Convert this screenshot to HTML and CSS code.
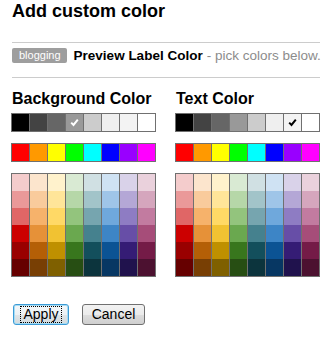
FILE: index.html
```html
<!DOCTYPE html>
<html>
<head>
<meta charset="utf-8">
<link rel="stylesheet" href="styles.css">
</head>
<body>
<div class="page">
  <h1 class="title">Add custom color</h1>
  <div class="rule"></div>
  <div class="preview">
    <span class="badge">blogging</span>
    <span class="preview-title">Preview Label Color</span>
    <span class="preview-hint">- pick colors below.</span>
  </div>
  <div class="rule"></div>
  <div class="pickers">
    <div class="picker">
      <h2 class="picker-title">Background Color</h2>
      <div class="swatches">
        <span class="sw" style="background:#000000"></span>
        <span class="sw" style="background:#434343"></span>
        <span class="sw" style="background:#666666"></span>
        <span class="sw sel" style="background:#999999"><svg class="chk" width="9" height="9" viewBox="0 0 9 9"><path d="M1.2 4.6 L3.5 6.9 L7.8 1.6" fill="none" stroke="#fff" stroke-width="2"/></svg></span>
        <span class="sw" style="background:#cccccc"></span>
        <span class="sw" style="background:#efefef"></span>
        <span class="sw" style="background:#f3f3f3"></span>
        <span class="sw" style="background:#ffffff"></span>
      </div>
      <div class="swatches">
        <span class="sw" style="background:#ff0000"></span>
        <span class="sw" style="background:#ff9900"></span>
        <span class="sw" style="background:#ffff00"></span>
        <span class="sw" style="background:#00ff00"></span>
        <span class="sw" style="background:#00ffff"></span>
        <span class="sw" style="background:#0000ff"></span>
        <span class="sw" style="background:#9900ff"></span>
        <span class="sw" style="background:#ff00ff"></span>
      </div>
      <div class="palette">
        <span style="background:#f4cccc"></span><span style="background:#fce5cd"></span><span style="background:#fff2cc"></span><span style="background:#d9ead3"></span><span style="background:#d0e0e3"></span><span style="background:#cfe2f3"></span><span style="background:#d9d2e9"></span><span style="background:#ead1dc"></span>
        <span style="background:#ea9999"></span><span style="background:#f9cb9c"></span><span style="background:#ffe599"></span><span style="background:#b6d7a8"></span><span style="background:#a2c4c9"></span><span style="background:#9fc5e8"></span><span style="background:#b4a7d6"></span><span style="background:#d5a6bd"></span>
        <span style="background:#e06666"></span><span style="background:#f6b26b"></span><span style="background:#ffd966"></span><span style="background:#93c47d"></span><span style="background:#76a5af"></span><span style="background:#6fa8dc"></span><span style="background:#8e7cc3"></span><span style="background:#c27ba0"></span>
        <span style="background:#cc0000"></span><span style="background:#e69138"></span><span style="background:#f1c232"></span><span style="background:#6aa84f"></span><span style="background:#45818e"></span><span style="background:#3d85c6"></span><span style="background:#674ea7"></span><span style="background:#a64d79"></span>
        <span style="background:#990000"></span><span style="background:#b45f06"></span><span style="background:#bf9000"></span><span style="background:#38761d"></span><span style="background:#134f5c"></span><span style="background:#0b5394"></span><span style="background:#351c75"></span><span style="background:#741b47"></span>
        <span style="background:#660000"></span><span style="background:#783f04"></span><span style="background:#7f6000"></span><span style="background:#274e13"></span><span style="background:#0c343d"></span><span style="background:#073763"></span><span style="background:#20124d"></span><span style="background:#4c1130"></span>
      </div>
    </div>
    <div class="picker">
      <h2 class="picker-title">Text Color</h2>
      <div class="swatches">
        <span class="sw" style="background:#000000"></span>
        <span class="sw" style="background:#434343"></span>
        <span class="sw" style="background:#666666"></span>
        <span class="sw" style="background:#999999"></span>
        <span class="sw" style="background:#cccccc"></span>
        <span class="sw" style="background:#efefef"></span>
        <span class="sw sel" style="background:#f3f3f3"><svg class="chk" width="9" height="9" viewBox="0 0 9 9"><path d="M1.2 4.6 L3.5 6.9 L7.8 1.6" fill="none" stroke="#000" stroke-width="2"/></svg></span>
        <span class="sw" style="background:#ffffff"></span>
      </div>
      <div class="swatches">
        <span class="sw" style="background:#ff0000"></span>
        <span class="sw" style="background:#ff9900"></span>
        <span class="sw" style="background:#ffff00"></span>
        <span class="sw" style="background:#00ff00"></span>
        <span class="sw" style="background:#00ffff"></span>
        <span class="sw" style="background:#0000ff"></span>
        <span class="sw" style="background:#9900ff"></span>
        <span class="sw" style="background:#ff00ff"></span>
      </div>
      <div class="palette">
        <span style="background:#f4cccc"></span><span style="background:#fce5cd"></span><span style="background:#fff2cc"></span><span style="background:#d9ead3"></span><span style="background:#d0e0e3"></span><span style="background:#cfe2f3"></span><span style="background:#d9d2e9"></span><span style="background:#ead1dc"></span>
        <span style="background:#ea9999"></span><span style="background:#f9cb9c"></span><span style="background:#ffe599"></span><span style="background:#b6d7a8"></span><span style="background:#a2c4c9"></span><span style="background:#9fc5e8"></span><span style="background:#b4a7d6"></span><span style="background:#d5a6bd"></span>
        <span style="background:#e06666"></span><span style="background:#f6b26b"></span><span style="background:#ffd966"></span><span style="background:#93c47d"></span><span style="background:#76a5af"></span><span style="background:#6fa8dc"></span><span style="background:#8e7cc3"></span><span style="background:#c27ba0"></span>
        <span style="background:#cc0000"></span><span style="background:#e69138"></span><span style="background:#f1c232"></span><span style="background:#6aa84f"></span><span style="background:#45818e"></span><span style="background:#3d85c6"></span><span style="background:#674ea7"></span><span style="background:#a64d79"></span>
        <span style="background:#990000"></span><span style="background:#b45f06"></span><span style="background:#bf9000"></span><span style="background:#38761d"></span><span style="background:#134f5c"></span><span style="background:#0b5394"></span><span style="background:#351c75"></span><span style="background:#741b47"></span>
        <span style="background:#660000"></span><span style="background:#783f04"></span><span style="background:#7f6000"></span><span style="background:#274e13"></span><span style="background:#0c343d"></span><span style="background:#073763"></span><span style="background:#20124d"></span><span style="background:#4c1130"></span>
      </div>
    </div>
  </div>
  <div class="actions">
    <button class="btn btn-focus"><span class="focus-ring">Apply</span></button>
    <button class="btn">Cancel</button>
  </div>
</div>
</body>
</html>
```

FILE: styles.css
```css
html, body {
  margin: 0;
  padding: 0;
  background: #ffffff;
}
.page {
  width: 309px;
  padding-left: 11px;
  font-family: "Liberation Sans", Arial, sans-serif;
  color: #000;
}
.title {
  margin: 0;
  font-size: 18px;
  line-height: 22px;
  font-weight: bold;
  padding-left: 1px;
}
.rule {
  height: 1px;
  background: #cccccc;
  margin-left: 1px;
}
.title + .rule {
  margin-top: 20px;
}
.preview {
  display: flex;
  align-items: flex-start;
  height: 34px;
  padding-left: 1px;
  box-sizing: border-box;
  padding-top: 5px;
  white-space: nowrap;
}
.preview > span {
  flex-shrink: 0;
}
.badge {
  display: inline-block;
  height: 15px;
  line-height: 15px;
  padding: 0 6px 0 7px;
  background: #9e9e9e;
  color: #fff;
  font-size: 11px;
  border-radius: 2px;
}
.preview-title {
  margin-left: 7px;
  font-size: 13.5px;
  font-weight: bold;
  line-height: 15px;
}
.preview-hint {
  margin-left: 4px;
  font-size: 13.5px;
  line-height: 15px;
  color: #8c8c8c;
}
.pickers {
  display: flex;
  gap: 19px;
  margin-top: 12px;
}
.picker {
  display: flex;
  flex-direction: column;
}
.picker-title {
  margin: 0 0 5px 1px;
  font-size: 16px;
  line-height: 18px;
  font-weight: bold;
  white-space: nowrap;
}
.swatches, .palette {
  display: grid;
  grid-template-columns: repeat(8, 17px);
  column-gap: 1px;
  padding: 1px;
  background: #707070;
  width: max-content;
}
.swatches {
  grid-auto-rows: 17px;
  margin-bottom: 11px;
}
.palette {
  grid-auto-rows: 17px;
  row-gap: 0;
}
.sw {
  display: flex;
  align-items: center;
  justify-content: center;
}
.chk {
  display: block;
}
.actions {
  display: flex;
  gap: 13px;
  margin-top: 27px;
  padding-left: 2px;
}
.btn {
  height: 21px;
  box-sizing: border-box;
  padding: 0;
  border: 1px solid #707070;
  border-radius: 3px;
  background: linear-gradient(#f2f2f2 0%, #ebebeb 50%, #dddddd 51%, #cfcfcf 100%);
  font-family: "Liberation Sans", Arial, sans-serif;
  font-size: 14px;
  line-height: 17px;
  color: #000;
}
.btn:not(.btn-focus) {
  width: 63px;
}
.btn-focus {
  width: 56px;
  border-color: #3c9bd6;
  box-shadow: inset 0 0 0 1px #a6dcf4;
  background: linear-gradient(#f4f8fa 0%, #ecf1f4 50%, #dfe5e8 51%, #d3dadd 100%);
}
.focus-ring {
  display: inline-block;
  outline: 1px dotted #000;
  padding: 0 2px;
  line-height: 15px;
}
```
